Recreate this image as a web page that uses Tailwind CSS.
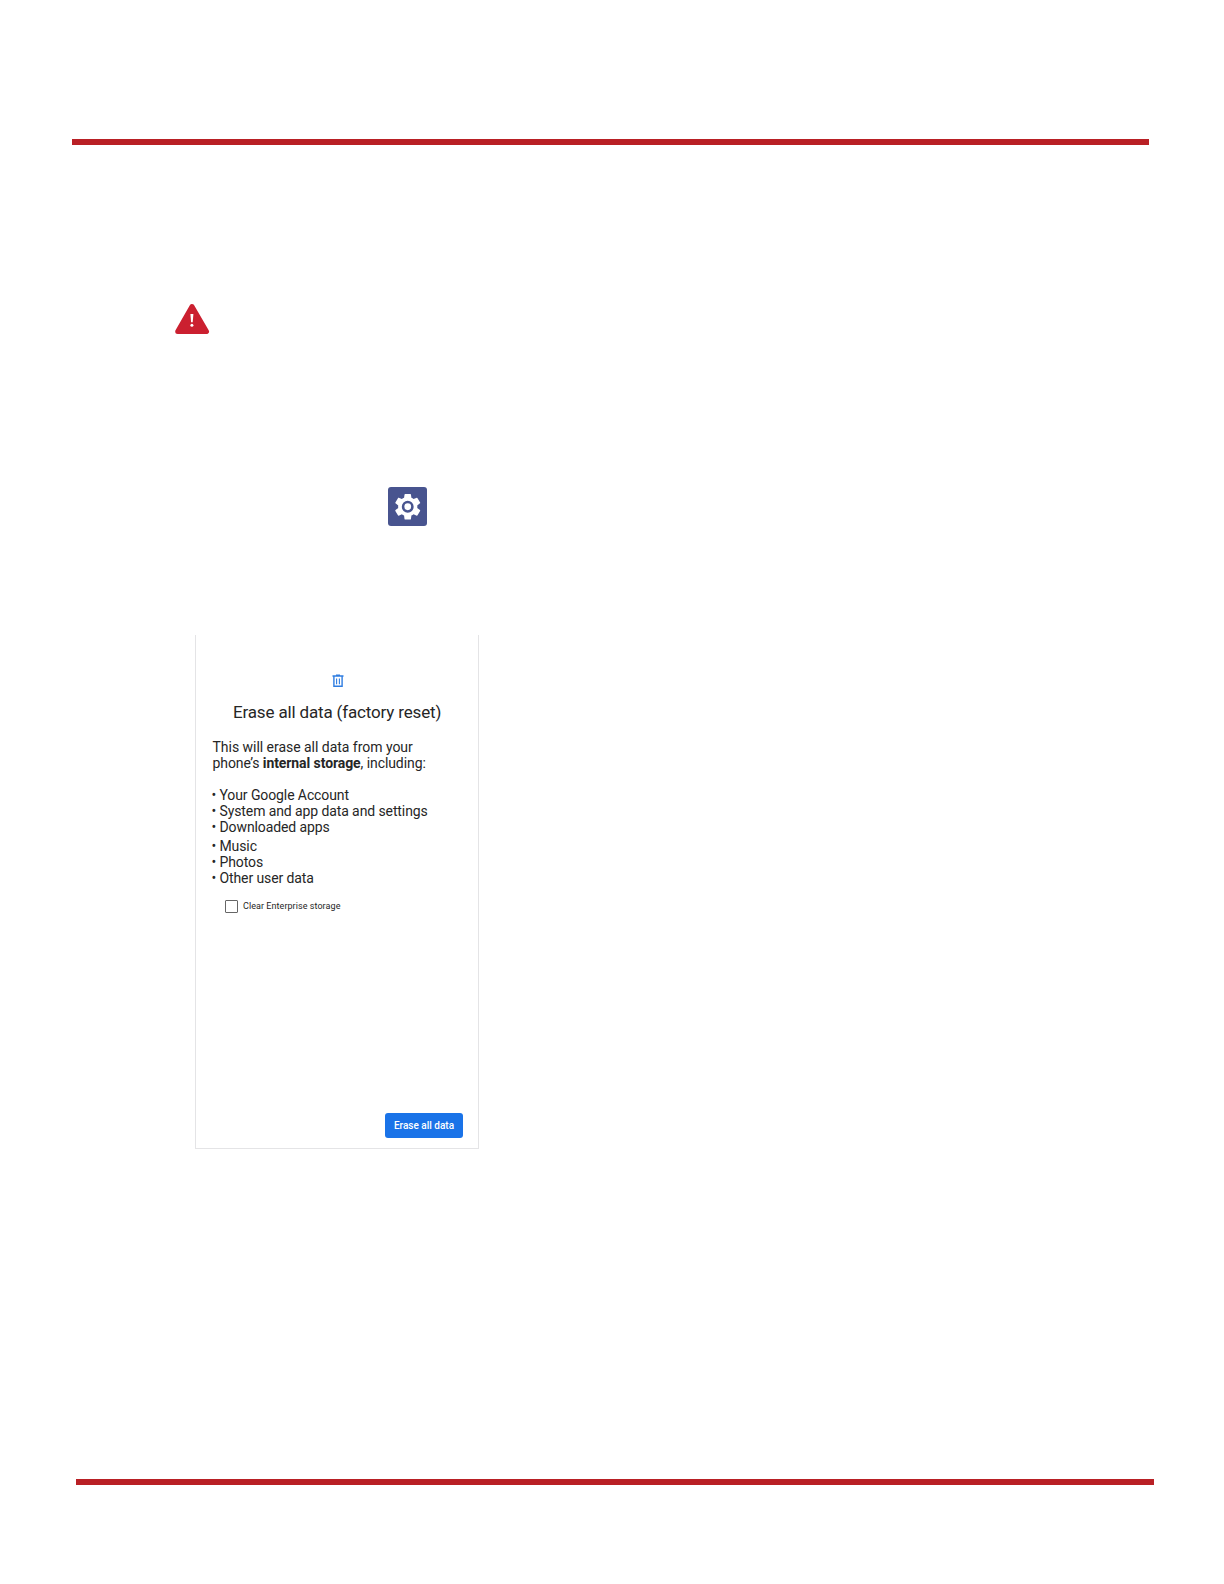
<!DOCTYPE html>
<html lang="en">
<head>
<meta charset="utf-8">
<title>Factory reset</title>
<script src="https://cdn.jsdelivr.net/npm/@tailwindcss/browser@4"></script>
</head>
<body class="bg-white">
<main class="flex h-[1584px] w-[1224px] flex-col items-start overflow-hidden bg-white font-['Roboto',sans-serif] text-[#262626]">
  <div class="mt-[139px] ml-[72px] h-1.5 w-[1077px] shrink-0 bg-[#b92025]"></div>
  <svg class="mt-[158px] ml-[175px] h-[32px] w-[35px] shrink-0" viewBox="0 0 35 32">
    <path d="M17 3.5 31.5 28.5H2.7Z" fill="#cb2030" stroke="#cb2030" stroke-width="5" stroke-linejoin="round"/>
    <path d="M15.4 11h3l-.7 8.2h-1.6Z" fill="#fff"/>
    <circle cx="16.9" cy="22.2" r="1.5" fill="#fff"/>
  </svg>
  <div class="mt-[152px] ml-[388px] flex h-[39px] w-[39px] shrink-0 items-center justify-center rounded-[3px] bg-[#48548f]">
    <svg class="h-[32px] w-[32px]" viewBox="0.2 0.2 24 24" fill="#fff"><path d="M19.14 12.94c.04-.3.06-.61.06-.94 0-.32-.02-.64-.07-.94l2.03-1.58a.49.49 0 0 0 .12-.61l-1.92-3.32a.488.488 0 0 0-.59-.22l-2.39.96c-.5-.38-1.03-.7-1.62-.94l-.36-2.54a.484.484 0 0 0-.48-.41h-3.84c-.24 0-.43.17-.47.41l-.36 2.54c-.59.24-1.13.57-1.62.94l-2.39-.96c-.22-.08-.47 0-.59.22L2.74 8.87c-.12.21-.08.47.12.61l2.03 1.58c-.05.3-.09.63-.09.94s.02.64.07.94l-2.03 1.58a.49.49 0 0 0-.12.61l1.92 3.32c.12.22.37.29.59.22l2.39-.96c.5.38 1.03.7 1.62.94l.36 2.54c.05.24.24.41.48.41h3.84c.24 0 .44-.17.47-.41l.36-2.54c.59-.24 1.13-.56 1.62-.94l2.39.96c.22.08.47 0 .59-.22l1.92-3.32c.12-.22.07-.47-.12-.61l-2.01-1.58Z"/><circle cx="12" cy="12" r="3.5" fill="none" stroke="#48548f" stroke-width="1.9"/></svg>
  </div>
  <section class="mt-[109px] ml-[195px] flex h-[514px] w-[284px] shrink-0 flex-col border-x border-b border-[#e4e4e6]">
    <svg class="mt-[39px] ml-[135.5px] h-[14px] w-[12px] shrink-0" viewBox="0 0 12 14" fill="none" stroke="#2f7de1" stroke-width="1.4"><path d="M.5 2h11M4 1.2h4M1.9 2v10.3h8.2V2"/><path d="M4.6 4.4v5.8M7.4 4.4v5.8" stroke-width="1.1"/></svg>
    <h1 class="mt-[14px] ml-[37px] h-5 whitespace-nowrap text-[17px] leading-5 tracking-[-0.16px]">Erase all data (factory reset)</h1>
    <p class="mt-[17px] ml-[16.5px] whitespace-nowrap text-[14px] leading-4"><span class="tracking-[-0.03px]">This will erase all data from your</span><br><span class="tracking-[-0.08px]">phone’s <b class="font-bold">internal storage</b>, including:</span></p>
    <ul class="mt-4 ml-[15.5px] whitespace-nowrap text-[14px] leading-[16.2px] tracking-[-0.1px]">
      <li class="flex"><span class="w-2">•</span><span>Your Google Account</span></li>
      <li class="flex"><span class="w-2">•</span><span>System and app data and settings</span></li>
      <li class="flex"><span class="w-2">•</span><span>Downloaded apps</span></li>
      <li class="mt-[2px] flex"><span class="w-2">•</span><span>Music</span></li>
      <li class="flex"><span class="w-2">•</span><span>Photos</span></li>
      <li class="flex"><span class="w-2">•</span><span>Other user data</span></li>
    </ul>
    <label class="mt-[14px] ml-[29px] flex h-[13px] items-center gap-[5px] whitespace-nowrap text-[9px] leading-[13px] tracking-[0.06px]"><span class="h-[13px] w-[13px] rounded-[1px] border-[1.5px] border-[#666]"></span><span>Clear Enterprise storage</span></label>
    <button class="mt-auto mr-[15px] mb-[10px] flex h-[25px] w-[78px] shrink-0 items-center justify-center self-end rounded-[3px] bg-[#1a73e8] text-[10px] font-medium whitespace-nowrap text-white">Erase all data</button>
  </section>
  <div class="mt-[330px] ml-[76px] h-1.5 w-[1078px] shrink-0 bg-[#b92025]"></div>
</main>
</body>
</html>
